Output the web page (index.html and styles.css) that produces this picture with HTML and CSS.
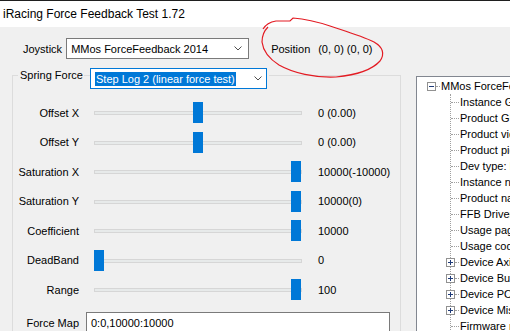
FILE: index.html
```html
<!DOCTYPE html>
<html lang="en">
<head>
  <meta charset="UTF-8">
  <title>iRacing Force Feedback Test 1.72</title>
  <link rel="stylesheet" href="styles.css">
</head>
<body>
  <div class="window">
    <div class="titlebar">iRacing Force Feedback Test 1.72</div>

    <div class="client">
      <div class="top-row">
        <span class="caption">Joystick</span>
        <div class="combo combo-joystick">
          <span class="combo-text">MMos ForceFeedback 2014</span>
          <svg class="chevron" width="8" height="5" viewBox="0 0 8 5"><polyline points="0.5,0.5 4,4 7.5,0.5"/></svg>
        </div>
        <span class="position-label">Position</span>
        <span class="position-value">(0, 0) (0, 0)</span>
      </div>

      <div class="content">
        <fieldset class="group">
          <legend class="group-head">
            <span class="group-label">Spring Force</span>
            <span class="group-line"></span>
            <div class="combo combo-spring">
              <span class="combo-text selected">Step Log 2 (linear force test)</span>
              <svg class="chevron" width="8" height="5" viewBox="0 0 8 5"><polyline points="0.5,0.5 4,4 7.5,0.5"/></svg>
            </div>
          </legend>

          <div class="sliders">
            <div class="slider-row">
              <span class="row-label">Offset X</span>
              <div class="slider"><div class="track"></div><div class="thumb" style="--pos: 0.5"></div></div>
              <span class="row-value">0 (0.00)</span>
            </div>
            <div class="slider-row">
              <span class="row-label">Offset Y</span>
              <div class="slider"><div class="track"></div><div class="thumb" style="--pos: 0.5"></div></div>
              <span class="row-value">0 (0.00)</span>
            </div>
            <div class="slider-row">
              <span class="row-label">Saturation X</span>
              <div class="slider"><div class="track"></div><div class="thumb" style="--pos: 1"></div></div>
              <span class="row-value">10000(-10000)</span>
            </div>
            <div class="slider-row">
              <span class="row-label">Saturation Y</span>
              <div class="slider"><div class="track"></div><div class="thumb" style="--pos: 1"></div></div>
              <span class="row-value">10000(0)</span>
            </div>
            <div class="slider-row">
              <span class="row-label">Coefficient</span>
              <div class="slider"><div class="track"></div><div class="thumb" style="--pos: 1"></div></div>
              <span class="row-value">10000</span>
            </div>
            <div class="slider-row">
              <span class="row-label">DeadBand</span>
              <div class="slider"><div class="track"></div><div class="thumb" style="--pos: 0"></div></div>
              <span class="row-value">0</span>
            </div>
            <div class="slider-row">
              <span class="row-label">Range</span>
              <div class="slider"><div class="track"></div><div class="thumb" style="--pos: 1"></div></div>
              <span class="row-value">100</span>
            </div>
          </div>

          <div class="map-row">
            <span class="row-label">Force Map</span>
            <div class="textbox">0:0,10000:10000</div>
          </div>
        </fieldset>

        <div class="tree">
          <div class="tree-root">
            <div class="tree-node">
              <svg class="expander" width="9" height="9" viewBox="0 0 9 9"><rect x="0.5" y="0.5" width="8" height="8"/><path d="M2 4.5h5"/></svg>
              <span class="stub short"></span>
              <span class="node-text">MMos ForceFeedback 2014</span>
            </div>
            <ul class="tree-children">
              <li><span class="stub"></span><span class="node-text">Instance GUID: {8B1E2A40}</span></li>
              <li><span class="stub"></span><span class="node-text">Product GUID: {2C1A1209}</span></li>
              <li><span class="stub"></span><span class="node-text">Product vid: 0x1209</span></li>
              <li><span class="stub"></span><span class="node-text">Product pid: 0x2C1A</span></li>
              <li><span class="stub"></span><span class="node-text">Dev type: Driving</span></li>
              <li><span class="stub"></span><span class="node-text">Instance name: MMos</span></li>
              <li><span class="stub"></span><span class="node-text">Product name: MMos</span></li>
              <li><span class="stub"></span><span class="node-text">FFB Driver: {EEC6993A}</span></li>
              <li><span class="stub"></span><span class="node-text">Usage page: 1</span></li>
              <li><span class="stub"></span><span class="node-text">Usage code: 4</span></li>
              <li class="closed">
                <svg class="expander" width="9" height="9" viewBox="0 0 9 9"><rect x="0.5" y="0.5" width="8" height="8"/><path d="M2 4.5h5M4.5 2v5"/></svg>
                <span class="stub short"></span><span class="node-text">Device Axis</span>
              </li>
              <li class="closed">
                <svg class="expander" width="9" height="9" viewBox="0 0 9 9"><rect x="0.5" y="0.5" width="8" height="8"/><path d="M2 4.5h5M4.5 2v5"/></svg>
                <span class="stub short"></span><span class="node-text">Device Buttons</span>
              </li>
              <li class="closed">
                <svg class="expander" width="9" height="9" viewBox="0 0 9 9"><rect x="0.5" y="0.5" width="8" height="8"/><path d="M2 4.5h5M4.5 2v5"/></svg>
                <span class="stub short"></span><span class="node-text">Device POVs</span>
              </li>
              <li class="closed">
                <svg class="expander" width="9" height="9" viewBox="0 0 9 9"><rect x="0.5" y="0.5" width="8" height="8"/><path d="M2 4.5h5M4.5 2v5"/></svg>
                <span class="stub short"></span><span class="node-text">Device Misc</span>
              </li>
              <li><span class="stub"></span><span class="node-text">Firmware revision</span></li>
            </ul>
          </div>
        </div>
      </div>
    </div>

    <!-- red hand-drawn mark around the position readout -->
    <svg class="annotation" width="510" height="331" viewBox="0 0 510 331">
      <path d="M263 29 C266 24 270 22 276 21 L290 21 L293 18 C305 19 318 22 330 26 C345 31 362 36 374 42 C383 47 385 54 380 61 C372 70 356 75 336 77 C315 78 293 73 279 65 C268 58 263 50 262 42 C262 36 264 31 268 27"/>
    </svg>
  </div>
</body>
</html>
```

FILE: styles.css
```css
:root {
  --face: #f0f0f0;
  --text: #000000;
  --accent: #0078d7;
  --edge: #7a7a7a;
  --group-edge: #dcdcdc;
  --tree-line: #a0a0a0;
}

* {
  margin: 0;
  padding: 0;
  box-sizing: border-box;
}

body {
  font-family: "Liberation Sans", Arial, sans-serif;
  font-size: 11px;
  color: var(--text);
  background-color: var(--face);
  white-space: nowrap;
}

.window {
  position: relative;
  width: 510px;
  height: 331px;
  overflow: hidden;
  background-color: var(--face);
}

/* Title bar */
.titlebar {
  height: 27px;
  border-top: 1px solid #1f1f1f;
  background-color: #ffffff;
  padding-left: 3px;
  line-height: 26px;
  font-size: 12px;
}

/* Top row */
.top-row {
  display: flex;
  align-items: center;
  height: 32px;
  padding: 11px 0 0 23px;
}

.top-row > * {
  flex-shrink: 0;
}

.caption {
  margin-right: 4px;
}

.combo {
  display: flex;
  align-items: center;
  justify-content: space-between;
  flex-shrink: 0;
  height: 21px;
  border: 1px solid var(--edge);
  background-color: #ffffff;
}

.combo-joystick {
  width: 183px;
  padding: 0 6px 0 4px;
}

.chevron {
  fill: none;
  stroke: #505050;
  stroke-width: 1;
}

.position-label {
  width: 47px;
  margin-left: 22px;
}

/* Main area */
.content {
  display: flex;
  align-items: flex-start;
  margin-top: 2px;
}

.group {
  flex-shrink: 0;
  width: 389px;
  height: 300px;
  margin-left: 12px;
  border: 1px solid var(--group-edge);
  min-width: 0;
}

.group-head {
  display: flex;
  align-items: flex-start;
  margin-left: 5px;
  padding: 0 2px;
}

.group-label {
  margin-top: 7px;
  line-height: 14px;
}

.group-line {
  width: 6px;
  height: 1px;
  margin-top: 14px;
  margin-left: 1px;
  background-color: var(--group-edge);
}

.combo-spring {
  width: 177px;
  margin-top: 7px;
  border-color: var(--accent);
  padding: 0 4px 0 4px;
}

.selected {
  background-color: var(--accent);
  color: #ffffff;
  line-height: 14px;
  padding: 0 1px;
}

/* Sliders */
.sliders {
  padding-top: 9px;
}

.slider-row {
  display: flex;
  align-items: center;
  height: 29.5px;
}

.row-label {
  flex-shrink: 0;
  width: 66px;
  text-align: right;
}

.slider {
  position: relative;
  flex-shrink: 0;
  width: 208px;
  height: 21px;
  margin-left: 15px;
}

.track {
  margin-top: 9px;
  height: 4px;
  background-color: #e7eaea;
  border: 1px solid #d6d6d6;
}

.thumb {
  position: absolute;
  top: 0;
  left: calc(var(--pos) * (100% - 11px));
  width: 10px;
  height: 21px;
  background-color: var(--accent);
}

.row-value {
  margin-left: 16px;
}

.map-row {
  display: flex;
  align-items: center;
  margin-top: 7px;
}

.textbox {
  flex-shrink: 0;
  width: 304px;
  height: 22px;
  margin-left: 7px;
  padding-left: 4px;
  line-height: 20px;
  border: 1px solid var(--edge);
  background-color: #ffffff;
}

/* Tree view */
.tree {
  flex-shrink: 0;
  width: 200px;
  height: 300px;
  margin-left: 15px;
  margin-top: 15px;
  padding: 1px 0 0 10px;
  border: 1px solid #828790;
  background-color: #ffffff;
}

.tree-node,
.tree-children li {
  display: flex;
  align-items: center;
  height: 16px;
}

.expander {
  flex-shrink: 0;
}

.expander rect {
  fill: #ffffff;
  stroke: #919191;
}

.expander path {
  stroke: #1e3a78;
  stroke-width: 1;
}

.stub {
  flex-shrink: 0;
  width: 8px;
  height: 0;
  margin-right: 1px;
  border-top: 1px dotted var(--tree-line);
}

.stub.short {
  width: 4px;
}

.tree-children {
  list-style: none;
  margin-left: 23px;
  border-left: 1px dotted var(--tree-line);
}

.tree-children li.closed .expander {
  margin-left: -5px;
}

/* Red pen mark */
.annotation {
  position: absolute;
  top: 0;
  left: 0;
  pointer-events: none;
  fill: none;
  stroke: #e31b23;
  stroke-width: 1.2;
}
```
